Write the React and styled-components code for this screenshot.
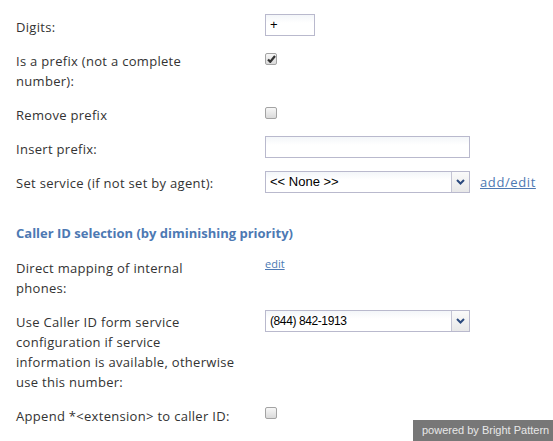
import React from 'react';
import styled, {createGlobalStyle} from 'styled-components';

const Global = createGlobalStyle`
  html, body {
    margin: 0;
    background: #fff;
  }
  body {
    font-family: 'Open Sans', 'Liberation Sans', sans-serif;
    font-size: 13px;
    color: #333;
  }
`

const Form = styled.div`
  padding: 10px 0 20px 16px;
`

const Row = styled.div`
  display: flex;
  align-items: flex-start;
  padding: 7px 0;
`

const Label = styled.div`
  width: 220px;
  margin-right: 13px;
  line-height: 20px;
  letter-spacing: 0.3px;
  flex-shrink: 0;
`

const Control = styled.div`
  margin-left: 16px;
  margin-top: ${props => props.$offset || 0}px;
  display: flex;
  align-items: center;
`

const TextBox = styled.div`
  box-sizing: border-box;
  width: ${props => props.$width}px;
  height: 22px;
  border: 1px solid #b9b9cd;
  background: linear-gradient(#f3f6f9, #fff 40%);
  font-family: 'Liberation Sans', Arial, sans-serif;
  font-size: 13px;
  color: #000;
  line-height: 20px;
  padding-left: 4px;
`

const Select = styled.div`
  box-sizing: border-box;
  width: 205px;
  height: 22px;
  border: 1px solid #b9b9cd;
  background: linear-gradient(#f3f6f9, #fff 40%);
  display: flex;
`

const SelectText = styled.div`
  flex: 1;
  padding-left: 4px;
  line-height: 20px;
  font-family: 'Liberation Sans', Arial, sans-serif;
  font-size: ${props => props.$size || 13}px;
  letter-spacing: ${props => props.$spacing || 0}px;
  color: #000;
`

const Arrow = styled.div`
  width: 17px;
  border-left: 1px solid #c4c4d4;
  background: linear-gradient(#fafafa, #e8e8e8);
  display: flex;
  align-items: center;
  justify-content: center;
`

const Check = styled.div`
  box-sizing: border-box;
  width: 12px;
  height: 12px;
  border: 1px solid #a3a3a3;
  border-radius: 2px;
  background: linear-gradient(#f7f7f7, #dadada);
  display: flex;
  align-items: center;
  justify-content: center;
`

const Link = styled.a`
  color: #4d79b3;
  text-decoration: underline;
  font-size: ${props => props.$size || 13}px;
  line-height: ${props => props.$size ? 14 : 20}px;
  letter-spacing: ${props => props.$size ? 0 : 0.6}px;
  margin-left: ${props => props.$gap || 0}px;
  cursor: pointer;
`

const Heading = styled.div`
  margin: 23px 0 8px;
  line-height: 20px;
  font-weight: bold;
  color: #4d79b3;
`

const Badge = styled.div`
  position: fixed;
  right: 0;
  bottom: 0;
  box-sizing: border-box;
  width: 140px;
  height: 21px;
  padding-left: 9px;
  background: #777;
  color: #e8e8e8;
  font-family: 'Liberation Sans', Arial, sans-serif;
  font-size: 11px;
  line-height: 21px;
  white-space: nowrap;
`

const Chevron = () => (
    <svg width="9" height="6" viewBox="0 0 9 6">
        <path d="M1 1 L4.5 4.5 L8 1" fill="none" stroke="#2b4a7e" strokeWidth="2"/>
    </svg>
)

const CheckBox = ({checked}) => (
    <Check>
        {checked &&
            <svg width="9" height="8" viewBox="0 0 9 8">
                <path d="M1 4.5 L3.3 6.8 L8 1" fill="none" stroke="#333" strokeWidth="2.2"/>
            </svg>}
    </Check>
)

const App = () => {
    return (
        <Form>
            <Global/>
            <Row>
                <Label>Digits:</Label>
                <Control $offset={-3}><TextBox $width={50}>+</TextBox></Control>
            </Row>
            <Row>
                <Label>Is a prefix (not a complete number):</Label>
                <Control $offset={2}><CheckBox checked/></Control>
            </Row>
            <Row>
                <Label>Remove prefix</Label>
                <Control $offset={2}><CheckBox/></Control>
            </Row>
            <Row>
                <Label>Insert prefix:</Label>
                <Control $offset={-3}><TextBox $width={205}/></Control>
            </Row>
            <Row>
                <Label>Set service (if not set by agent):</Label>
                <Control $offset={-2}>
                    <Select>
                        <SelectText>&lt;&lt; None &gt;&gt;</SelectText>
                        <Arrow><Chevron/></Arrow>
                    </Select>
                    <Link $gap={10}>add/edit</Link>
                </Control>
            </Row>

            <Heading>Caller ID selection (by diminishing priority)</Heading>

            <Row>
                <Label>Direct mapping of internal phones:</Label>
                <Control $offset={-1}><Link $size={11}>edit</Link></Control>
            </Row>
            <Row>
                <Label>Use Caller ID form service configuration if service information is available, otherwise use this number:</Label>
                <Control $offset={-2}>
                    <Select>
                        <SelectText $size={12} $spacing={-0.4}>(844) 842-1913</SelectText>
                        <Arrow><Chevron/></Arrow>
                    </Select>
                </Control>
            </Row>
            <Row>
                <Label>Append *&lt;extension&gt; to caller ID:</Label>
                <Control $offset={1}><CheckBox/></Control>
            </Row>

            <Badge>powered by Bright Pattern</Badge>
        </Form>
    );
};

export default App;
